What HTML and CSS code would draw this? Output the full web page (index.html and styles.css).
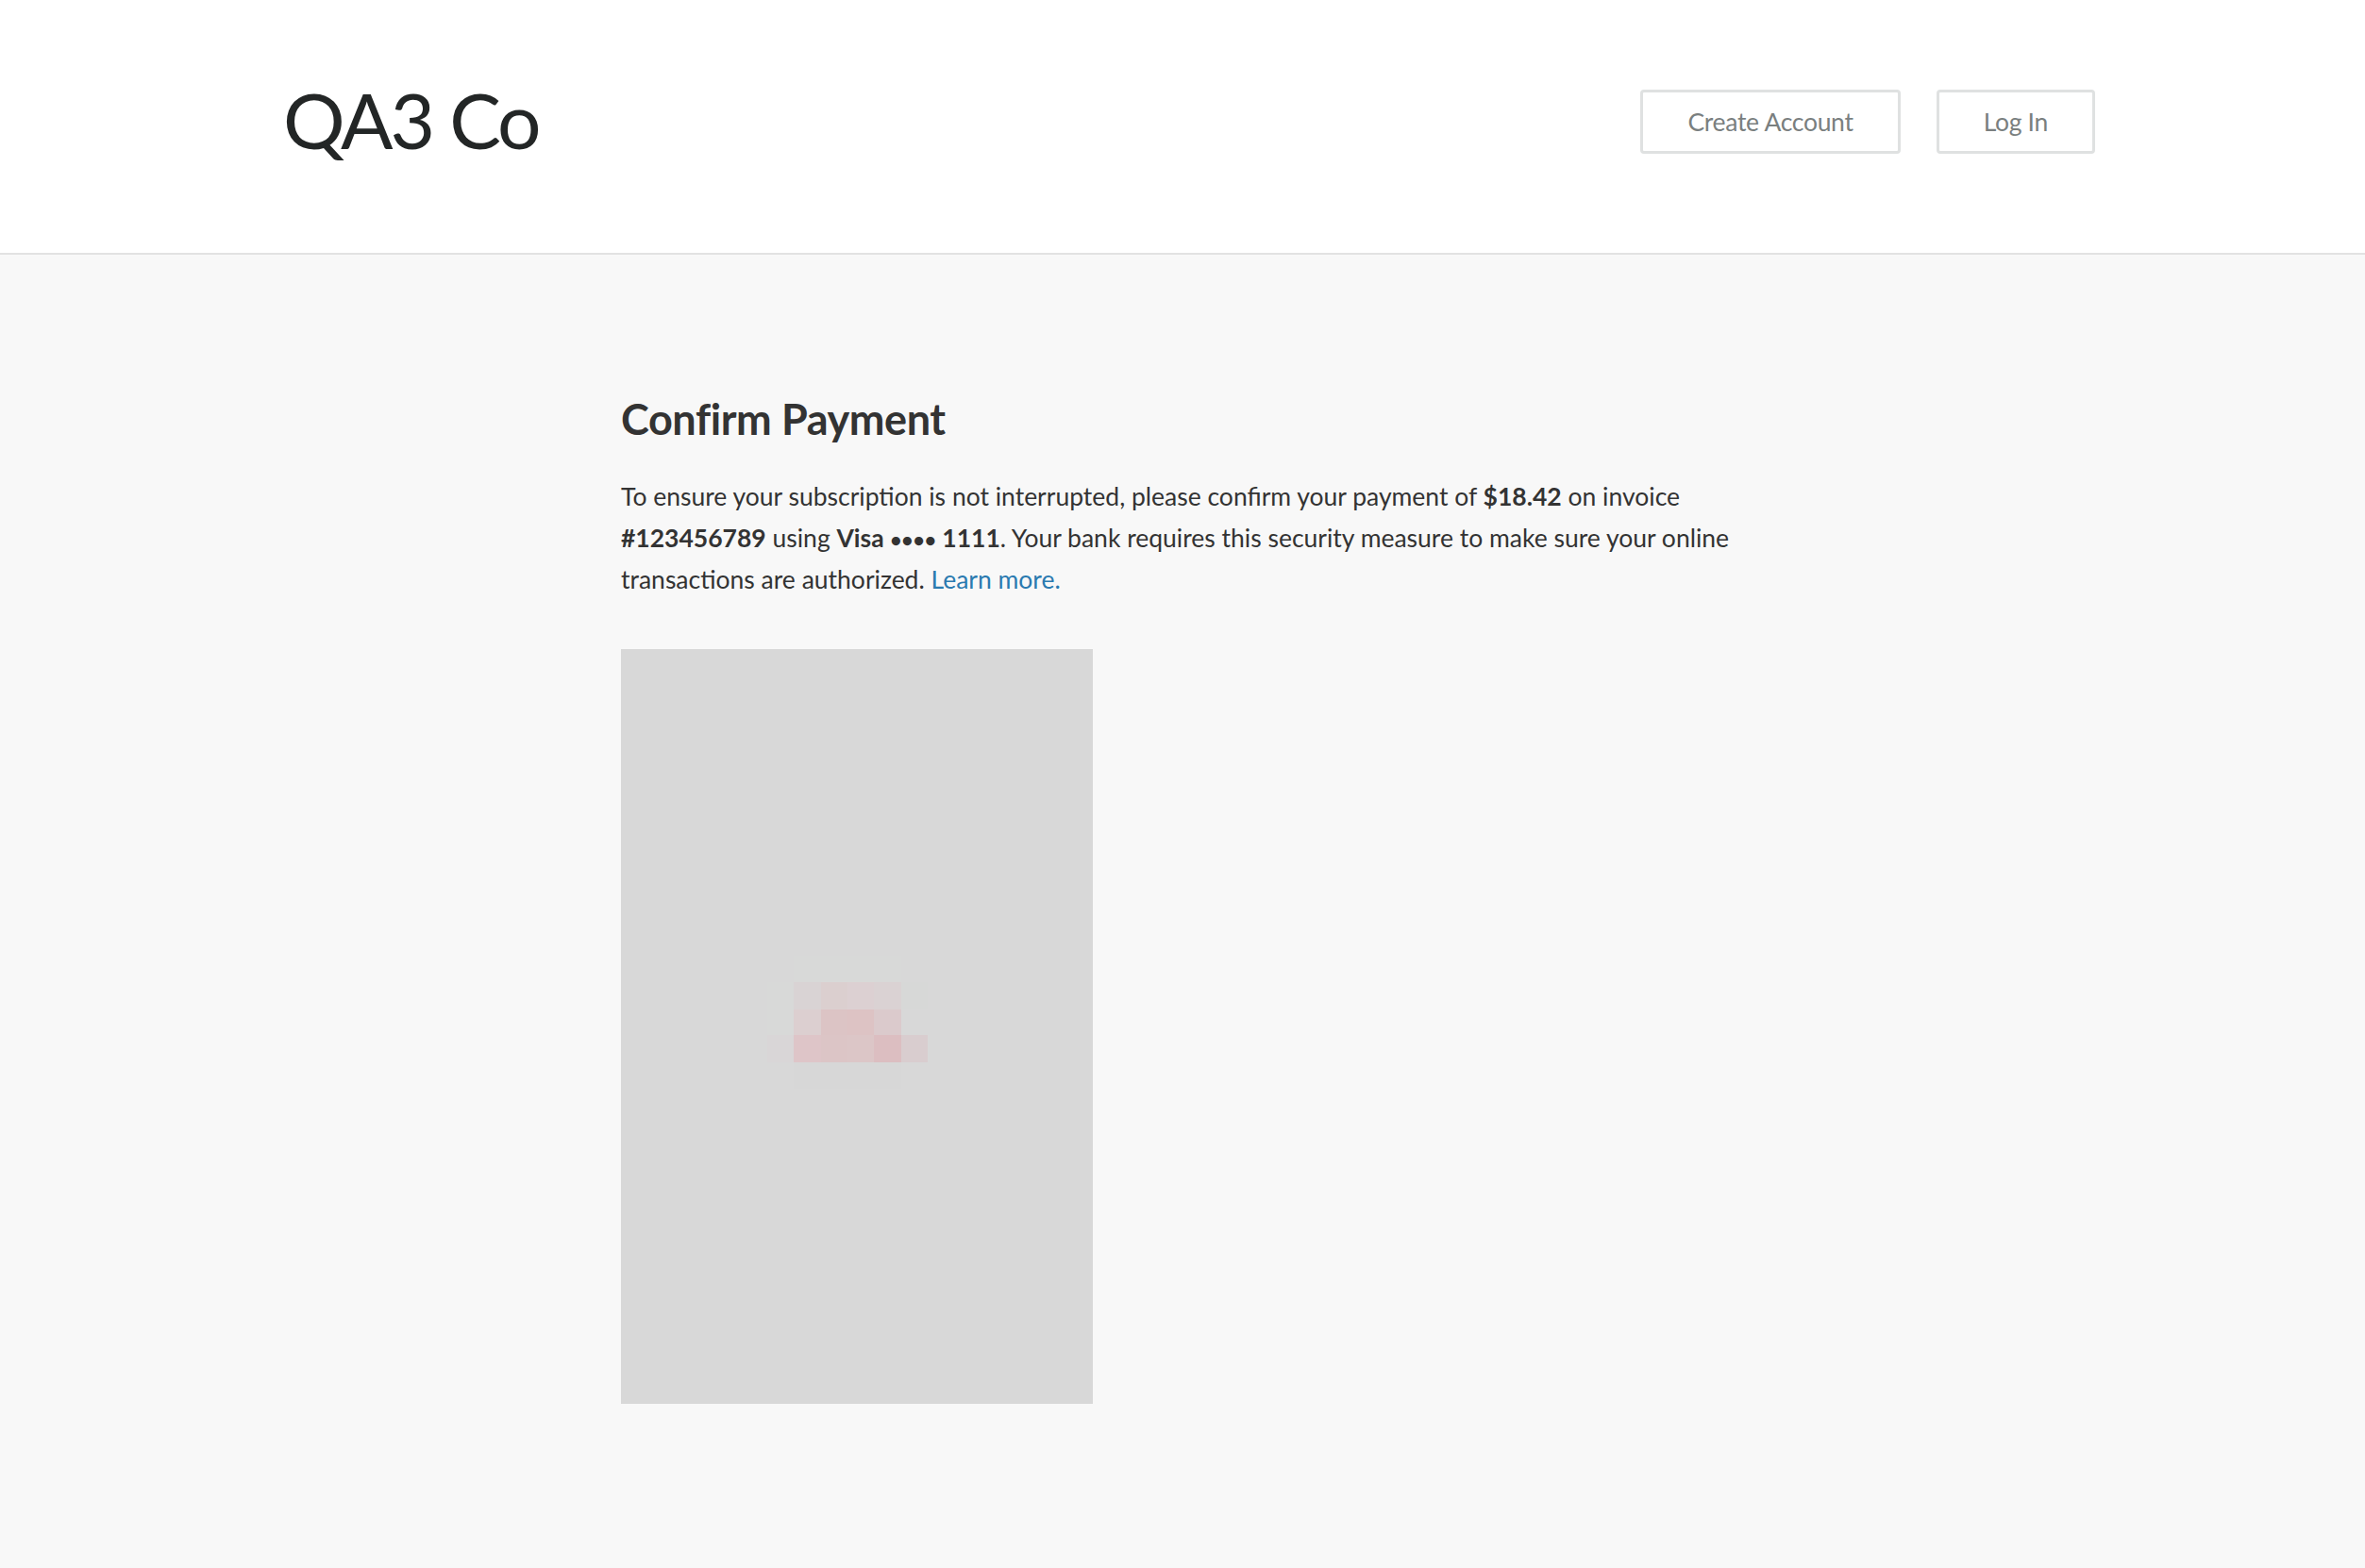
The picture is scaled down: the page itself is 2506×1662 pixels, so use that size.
FILE: index.html
```html
<!DOCTYPE html>
<html lang="en">

<head>
    <meta charset="UTF-8">
    <meta name="viewport" content="width=device-width, initial-scale=1.0">
    <title>Confirm Payment - QA3 Co</title>
    <link rel="stylesheet" href="styles.css">
</head>

<body>
    <header class="header">
        <div class="logo">QA3 Co</div>
        <nav class="nav">
            <a class="nav-button" href="#">Create Account</a>
            <a class="nav-button" href="#">Log In</a>
        </nav>
    </header>

    <main class="content">
        <h1 class="title">Confirm Payment</h1>
        <p class="intro">
            To ensure your subscription is not interrupted, please confirm your payment of <strong>$18.42</strong> on invoice
            <strong>#123456789</strong> using <strong>Visa <span class="dots">&bull;&bull;&bull;&bull;</span> 1111</strong>. Your bank requires this security measure to make sure your online
            transactions are authorized. <a class="link" href="#">Learn more.</a>
        </p>

        <div class="frame">
            <svg class="loader" width="190" height="142" viewBox="0 0 190 142">
                <rect x="28" y="0" width="114" height="28" fill="#d8d9d8"/>
                <rect x="0" y="28" width="28" height="57" fill="#d8d9d8"/>
                <rect x="28" y="28" width="29" height="29" fill="#d9d3d4"/>
                <rect x="57" y="28" width="28" height="29" fill="#dbcfcf"/>
                <rect x="85" y="28" width="28" height="29" fill="#dcd0d2"/>
                <rect x="113" y="28" width="29" height="29" fill="#dad2d3"/>
                <rect x="142" y="28" width="28" height="29" fill="#d7d8d7"/>
                <rect x="28" y="57" width="29" height="27" fill="#dccfd0"/>
                <rect x="57" y="57" width="28" height="27" fill="#dcc4c5"/>
                <rect x="85" y="57" width="28" height="27" fill="#ddc3c4"/>
                <rect x="113" y="57" width="29" height="27" fill="#dbcacc"/>
                <rect x="0" y="84" width="28" height="29" fill="#d9d6d7"/>
                <rect x="28" y="84" width="29" height="29" fill="#dec5c8"/>
                <rect x="57" y="84" width="28" height="29" fill="#dcc5c6"/>
                <rect x="85" y="84" width="28" height="29" fill="#dcc6c7"/>
                <rect x="113" y="84" width="29" height="29" fill="#dcbec1"/>
                <rect x="142" y="84" width="28" height="29" fill="#d9cdcf"/>
                <rect x="170" y="84" width="19" height="29" fill="#d8d8d8"/>
                <rect x="28" y="113" width="114" height="28" fill="#d7d7d7"/>
            </svg>
        </div>
    </main>
</body>

</html>
```

FILE: styles.css
```css
body {
    margin: 0;
    font-family: Lato, "Open Sans", sans-serif;
    background-color: #f8f8f8;
    color: #333;
}

.header {
    display: flex;
    align-items: center;
    justify-content: space-between;
    box-sizing: border-box;
    height: 270px;
    padding: 0 286px 10px 300px;
    background-color: #fff;
    border-bottom: 2px solid #e2e2e2;
}

.logo {
    font-size: 82px;
    color: #232626;
    letter-spacing: -3px;
    margin-top: -6px;
}

.nav {
    display: flex;
    gap: 38px;
}

.nav-button {
    display: inline-block;
    height: 62px;
    line-height: 62px;
    padding: 0 47px;
    border: 3px solid #dfe1e1;
    border-radius: 4px;
    color: #7a7f7f;
    font-size: 26.5px;
    text-decoration: none;
    letter-spacing: -0.3px;
}

.content {
    width: 1190px;
    margin: 0 auto;
    padding: 147px 0 80px;
}

.title {
    margin: 0;
    font-size: 45px;
    line-height: 1.2;
    font-weight: 700;
    color: #333;
    letter-spacing: -0.4px;
}

.intro {
    margin: 33px 0 0;
    font-size: 26.5px;
    line-height: 44px;
    color: #333;
}

.intro strong {
    font-weight: 700;
}

.dots {
    font-size: 21px;
    line-height: 0;
}

.link {
    color: #2a7ab0;
    text-decoration: none;
}

.frame {
    display: flex;
    align-items: center;
    justify-content: center;
    width: 500px;
    height: 800px;
    margin-top: 52px;
    background-color: #d8d8d8;
}

.loader {
    margin-top: -8px;
}
```
